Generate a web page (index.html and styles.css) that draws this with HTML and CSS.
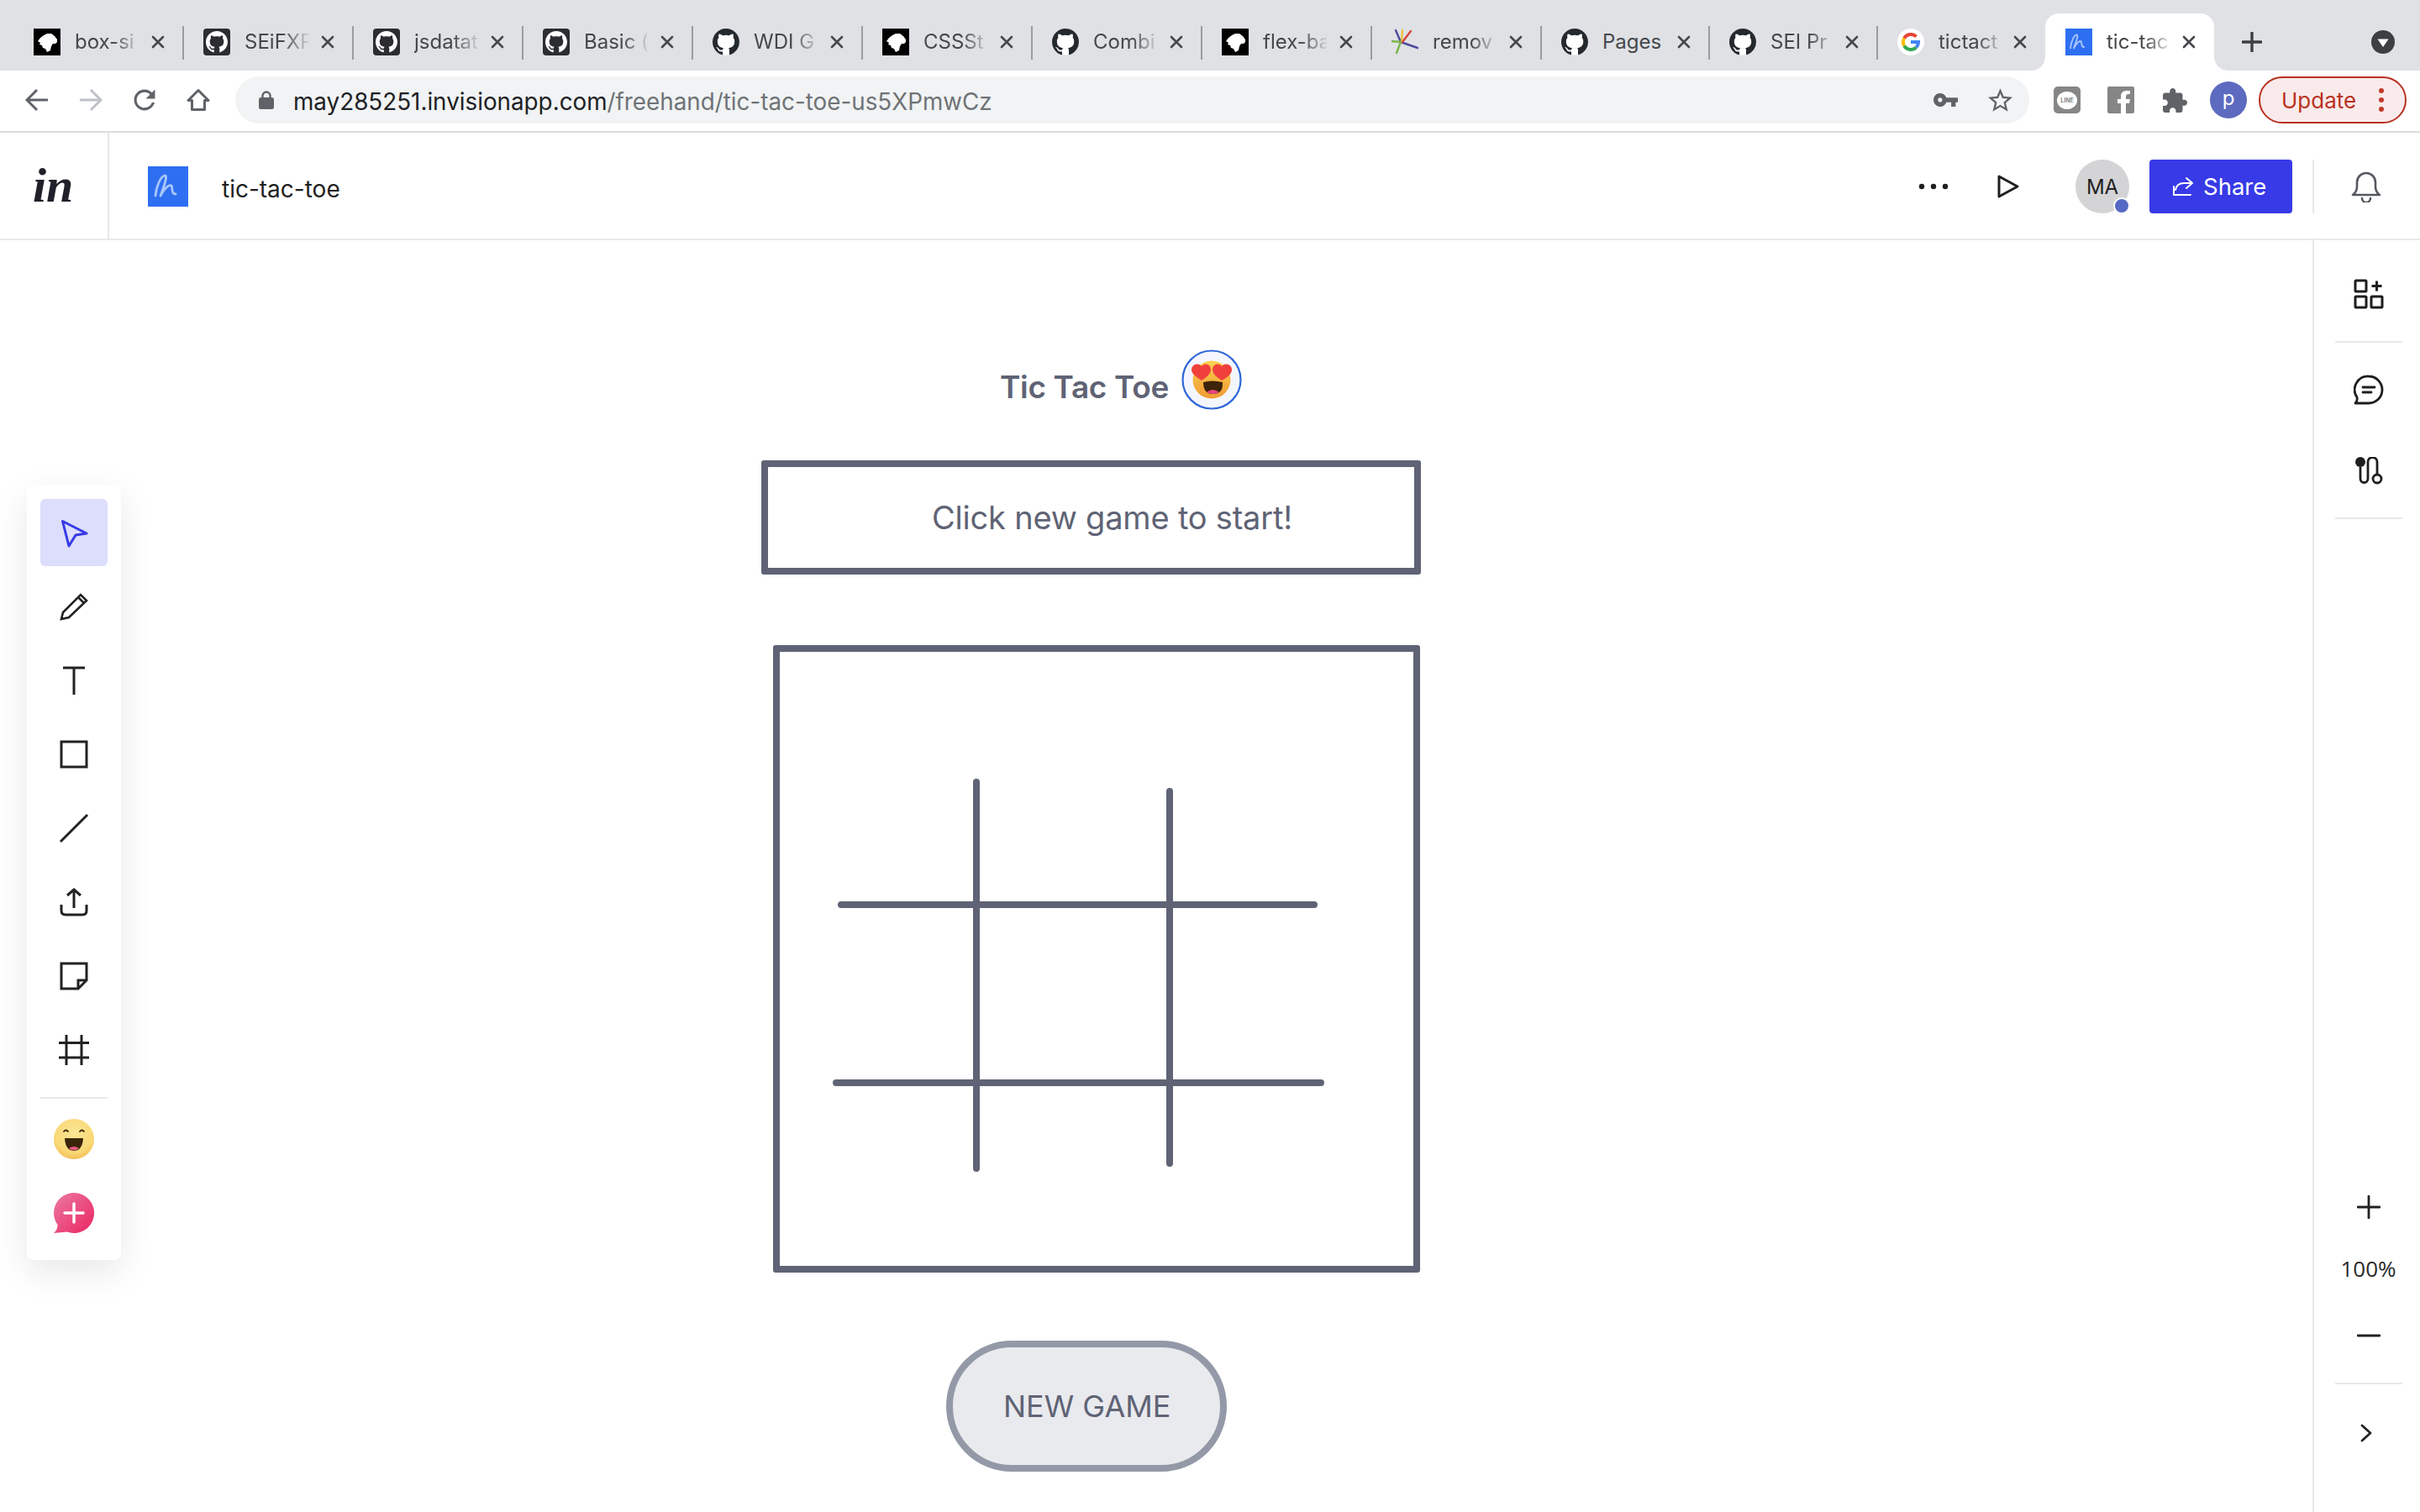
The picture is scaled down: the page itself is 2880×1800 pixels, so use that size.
FILE: index.html
```html
<!DOCTYPE html>
<html lang="en">
<head>
<meta charset="utf-8">
<title>tic-tac-toe</title>
<link rel="stylesheet" href="styles.css">
</head>
<body>
<svg class="defs" width="0" height="0" aria-hidden="true">
  <defs>
    <symbol id="octo" viewBox="0 0 16 16"><path d="M8 0C3.58 0 0 3.58 0 8c0 3.54 2.29 6.53 5.47 7.59.4.07.55-.17.55-.38 0-.19-.01-.82-.01-1.49-2.01.37-2.53-.49-2.69-.94-.09-.23-.48-.94-.82-1.13-.28-.15-.68-.52-.01-.53.63-.01 1.08.58 1.23.82.72 1.21 1.87.87 2.33.66.07-.52.28-.87.51-1.07-1.78-.2-3.64-.89-3.64-3.95 0-.87.31-1.59.82-2.15-.08-.2-.36-1.02.08-2.12 0 0 .67-.21 2.2.82.64-.18 1.32-.27 2-.27.68 0 1.36.09 2 .27 1.53-1.04 2.2-.82 2.2-.82.44 1.1.16 1.92.08 2.12.51.56.82 1.27.82 2.15 0 3.07-1.87 3.75-3.65 3.95.29.25.54.73.54 1.48 0 1.07-.01 1.93-.01 2.2 0 .21.15.46.55.38A8.013 8.013 0 0016 8c0-4.42-3.58-8-8-8z"/></symbol>
    <symbol id="fav-gh-plain" viewBox="0 0 32 32"><circle cx="16" cy="16" r="15.5" fill="#fff"/><use href="#octo" width="32" height="32" fill="#24292e"/></symbol>
    <symbol id="fav-gh" viewBox="0 0 32 32"><rect width="32" height="32" rx="4" fill="#2b2d30"/><use href="#octo" x="3" y="3" width="26" height="26" fill="#fff"/></symbol>
    <symbol id="fav-css" viewBox="0 0 32 32"><rect width="32" height="32" fill="#000"/><path fill="#fff" d="M5 15l3-4 4-3 4-2h5l4 3 3 4v3l-2 2h-3l-2 3-1 5-4 2-2-4-3-1-1-3-3-1 1-2z"/></symbol>
    <symbol id="fav-remove" viewBox="0 0 32 32"><g fill="none" stroke-width="2.4" stroke-linecap="round"><path stroke="#4f4a9b" d="M11 16l20 7"/><path stroke="#4f4a9b" d="M11 16L5 2"/><path stroke="#e8c33f" d="M12 16L13 2"/><path stroke="#d8463c" d="M13 16L23 3"/><path stroke="#7ab648" d="M11 16L6 29M11 16L0 15"/></g></symbol>
    <symbol id="fav-google" viewBox="0 0 32 32"><circle cx="16" cy="16" r="16" fill="#fff"/><g fill="none" stroke-width="4"><path stroke="#ea4335" d="M8.2 11.5A9 9 0 0 1 22.4 9.7"/><path stroke="#fbbc05" d="M8.2 11.5A9 9 0 0 0 8.2 20.5"/><path stroke="#34a853" d="M8.2 20.5A9 9 0 0 0 22.4 22.3"/><path stroke="#4285f4" d="M22.4 22.3A9 9 0 0 0 25 16H16"/></g></symbol>
    <symbol id="fav-hand" viewBox="0 0 48 48"><rect width="48" height="48" fill="#2e6ff2"/><path fill="none" stroke="#a9c6fb" stroke-width="2.800" stroke-linecap="round" stroke-linejoin="round" d="M9 35C10 24 15 12 20 11c4 0-1 13-5 24 4-8 10-14 13-12 2 3-1 10 5 10"/></symbol>
    <symbol id="tab-x" viewBox="0 0 16 16"><path d="M2 2l12 12M14 2L2 14" fill="none" stroke="#45474b" stroke-width="2.6" stroke-linecap="round"/></symbol>
  </defs>
</svg>

<header class="tabstrip">
  <div class="tab sep"><svg class="fav"><use href="#fav-css"/></svg><span class="label">box-si</span><svg class="close"><use href="#tab-x"/></svg></div>
  <div class="tab sep"><svg class="fav"><use href="#fav-gh"/></svg><span class="label">SEiFXR</span><svg class="close"><use href="#tab-x"/></svg></div>
  <div class="tab sep"><svg class="fav"><use href="#fav-gh"/></svg><span class="label">jsdatat</span><svg class="close"><use href="#tab-x"/></svg></div>
  <div class="tab sep"><svg class="fav"><use href="#fav-gh"/></svg><span class="label">Basic (</span><svg class="close"><use href="#tab-x"/></svg></div>
  <div class="tab sep"><svg class="fav"><use href="#fav-gh-plain"/></svg><span class="label">WDI G</span><svg class="close"><use href="#tab-x"/></svg></div>
  <div class="tab sep"><svg class="fav"><use href="#fav-css"/></svg><span class="label">CSSSt</span><svg class="close"><use href="#tab-x"/></svg></div>
  <div class="tab sep"><svg class="fav"><use href="#fav-gh-plain"/></svg><span class="label">Combi</span><svg class="close"><use href="#tab-x"/></svg></div>
  <div class="tab sep"><svg class="fav"><use href="#fav-css"/></svg><span class="label">flex-ba</span><svg class="close"><use href="#tab-x"/></svg></div>
  <div class="tab sep"><svg class="fav"><use href="#fav-remove"/></svg><span class="label">remov</span><svg class="close"><use href="#tab-x"/></svg></div>
  <div class="tab sep narrow"><svg class="fav"><use href="#fav-gh-plain"/></svg><span class="label full">Pages</span><svg class="close"><use href="#tab-x"/></svg></div>
  <div class="tab sep narrow"><svg class="fav"><use href="#fav-gh-plain"/></svg><span class="label">SEI Pr</span><svg class="close"><use href="#tab-x"/></svg></div>
  <div class="tab narrow"><svg class="fav"><use href="#fav-google"/></svg><span class="label">tictact</span><svg class="close"><use href="#tab-x"/></svg></div>
  <div class="tab narrow active"><svg class="fav"><use href="#fav-hand"/></svg><span class="label">tic-tac</span><svg class="close"><use href="#tab-x"/></svg></div>
  <svg class="newtab" viewBox="0 0 24 24"><path d="M12 1v22M1 12h22" fill="none" stroke="#3c4043" stroke-width="3.4" stroke-linecap="round"/></svg>
  <svg class="tabmenu" viewBox="0 0 28 28"><circle cx="14" cy="14" r="14" fill="#3c4043"/><path d="M7.5 10.5h13L14 20z" fill="#fff"/></svg>
</header>

<nav class="toolbar">
  <div class="navbtns">
    <svg class="navicon" viewBox="0 0 28 28"><path d="M27 14H3M14 2L2 14l12 12" fill="none" stroke="#5f6368" stroke-width="3"/></svg>
    <svg class="navicon" viewBox="0 0 28 28"><path d="M1 14h24M14 2l12 12-12 12" fill="none" stroke="#bdc1c6" stroke-width="3"/></svg>
    <svg class="navicon" viewBox="3 3 18 18"><path fill="#5f6368" d="M17.65 6.35C16.2 4.9 14.21 4 12 4c-4.42 0-7.99 3.58-7.99 8s3.57 8 7.99 8c3.73 0 6.84-2.55 7.73-6h-2.08c-.82 2.33-3.04 4-5.65 4-3.31 0-6-2.69-6-6s2.69-6 6-6c1.66 0 3.14.69 4.22 1.78L13 11h7V4l-2.35 2.35z"/></svg>
    <svg class="navicon" viewBox="0 0 28 28"><path d="M14 2.5L2 14.5h4.5v11h15v-11H26z" fill="none" stroke="#5f6368" stroke-width="3" stroke-linejoin="round"/></svg>
  </div>
  <div class="omnibox">
    <svg class="lock" viewBox="0 0 18 22"><path d="M4.5 9V6a4.5 4.5 0 0 1 9 0v3" fill="none" stroke="#5f6368" stroke-width="2.4"/><rect y="8" width="18" height="14" rx="2.5" fill="#5f6368"/></svg>
    <span class="url"><span class="host">may285251.invisionapp.com</span>/freehand/tic-tac-toe-us5XPmwCz</span>
    <svg class="key" viewBox="1 6 22 12"><path fill="#5f6368" d="M12.65 10C11.83 7.67 9.61 6 7 6c-3.31 0-6 2.69-6 6s2.69 6 6 6c2.61 0 4.83-1.67 5.65-4H17v4h4v-4h2v-4H12.65zM7 14c-1.1 0-2-.9-2-2s.9-2 2-2 2 .9 2 2-.9 2-2 2z"/></svg>
    <svg class="star" viewBox="2 2 20 19"><path fill="#5f6368" d="M22 9.24l-7.19-.62L12 2 9.19 8.63 2 9.24l5.46 4.73L5.82 21 12 17.27 18.18 21l-1.63-7.03L22 9.24zM12 15.4l-3.76 2.27 1-4.28-3.32-2.88 4.38-.38L12 6.1l1.71 4.04 4.38.38-3.32 2.88 1 4.28L12 15.4z"/></svg>
  </div>
  <div class="ext line"><span class="bubble">LINE</span></div>
  <svg class="ext fb" viewBox="0 0 32 32"><rect width="32" height="32" rx="2" fill="#868686"/><path fill="#fff" d="M22 32V20h4l1-5h-5v-3c0-2 1-3 3-3h2V5h-4c-5 0-7 3-7 7v3h-4v5h4v12z"/></svg>
  <svg class="puzzle" viewBox="2 1 21 21"><path fill="#5f6368" d="M20.5 11H19V7c0-1.1-.9-2-2-2h-4V3.5C13 2.12 11.88 1 10.5 1S8 2.12 8 3.5V5H4c-1.1 0-1.99.9-1.99 2v3.8H3.5c1.49 0 2.7 1.21 2.7 2.7s-1.21 2.7-2.7 2.7H2V20c0 1.1.9 2 2 2h3.8v-1.5c0-1.49 1.21-2.7 2.7-2.7 1.49 0 2.7 1.21 2.7 2.7V22H17c1.1 0 2-.9 2-2v-4h1.5c1.38 0 2.5-1.12 2.5-2.5S21.88 11 20.5 11z"/></svg>
  <div class="profile">p</div>
  <div class="update"><span>Update</span><span class="dots"><i></i><i></i><i></i></span></div>
</nav>

<header class="apphead">
  <div class="logo"><span class="logotext">in</span></div>
  <svg class="docicon"><use href="#fav-hand"/></svg>
  <span class="docname">tic-tac-toe</span>
  <div class="spacer"></div>
  <svg class="more" viewBox="0 0 36 8"><circle cx="4" cy="4" r="3.2"/><circle cx="18" cy="4" r="3.2"/><circle cx="32" cy="4" r="3.2"/></svg>
  <svg class="play" viewBox="0 0 28 30"><path d="M3 3l22 12L3 27z" fill="none" stroke="#1f1f1f" stroke-width="3" stroke-linejoin="round"/></svg>
  <div class="avatar">MA<span class="presence"></span></div>
  <div class="share">
    <svg class="shareicon" viewBox="0 0 26 24"><path d="M17 2l7 6-7 6M23 8h-9c-6 0-9 3-10 8M2 12v10h20" fill="none" stroke="#fff" stroke-width="2" stroke-linejoin="round" stroke-linecap="round"/></svg>
    <span>Share</span>
  </div>
  <div class="bellwrap">
    <svg class="bell" viewBox="0 0 36 38"><path d="M2 29c3-2 5-5 5-10v-5a11 11 0 0 1 22 0v5c0 5 2 8 5 10zM13 33a5 5 0 0 0 10 0" fill="none" stroke="#55585f" stroke-width="2.6" stroke-linejoin="round" stroke-linecap="round"/></svg>
  </div>
</header>

<main class="workspace">
  <section class="canvas">
    <h1 class="title">Tic Tac Toe</h1>
    <svg class="badge" viewBox="0 0 72 72">
      <defs><linearGradient id="faceg" x1="0" y1="0" x2="0" y2="1"><stop offset="0" stop-color="#fbd04e"/><stop offset="1" stop-color="#f09a33"/></linearGradient></defs>
      <circle cx="36" cy="36" r="34.5" fill="#f4f6fe" stroke="#2e67d8" stroke-width="2.2"/>
      <circle cx="36" cy="36" r="22.5" fill="url(#faceg)"/>
      <path fill="#f0403c" d="M24 37C17 32 12 29 12 24c0-6 8-9 12-4 4-5 11-2 11 4 0 5-5 9-11 13zM48 37c-6-4-11-8-11-13 0-6 7-9 11-4 4-5 12-2 12 4 0 5-5 9-12 13z"/>
      <path fill="#3e2408" d="M26 39q10-3 23 0q1 14-11.500 14Q26 53 26 39z"/>
      <path fill="#e9467f" d="M30 51q7-6 15 0q-7 4-15 0z"/>
    </svg>
    <div class="status">Click new game to start!</div>
    <div class="board"></div>
    <svg class="gridlines" viewBox="0 0 600 480">
      <g fill="none" stroke="#5f6375" stroke-width="8" stroke-linecap="round">
        <path d="M176 8V468M406 19V462M15 154H578M9 366H586"/>
      </g>
    </svg>
    <div class="newgame">NEW GAME</div>

    <aside class="tools">
      <div class="tool active"><svg class="toolicon" viewBox="0 0 36 36"><path d="M4.500 4.500L33 19l-13 2-8 13z" fill="none" stroke="#373ae6" stroke-width="3" stroke-linejoin="round"/></svg></div>
      <div class="tool"><svg class="toolicon" viewBox="0 0 36 36"><path d="M3 33l2-8L26 4l7 7-21 20zM23 7l7 7" fill="none" stroke="#222" stroke-width="2.600"/></svg></div>
      <div class="tool"><svg class="toolicon" viewBox="0 0 36 36"><path d="M5 3h26M18 3v32" fill="none" stroke="#222" stroke-width="3"/></svg></div>
      <div class="tool"><svg class="toolicon" viewBox="0 0 36 36"><rect x="3" y="3" width="30" height="30" fill="none" stroke="#222" stroke-width="3"/></svg></div>
      <div class="tool"><svg class="toolicon" viewBox="0 0 36 36"><path d="M2 34L34 2" fill="none" stroke="#222" stroke-width="3"/></svg></div>
      <div class="tool"><svg class="toolicon" viewBox="0 0 36 36"><path d="M18 3v22M10 10l8-7 8 7M3 21v7q0 5 5 5h20q5 0 5-5v-7" fill="none" stroke="#222" stroke-width="3"/></svg></div>
      <div class="tool"><svg class="toolicon" viewBox="0 0 36 36"><path d="M3 3h30v20L23 33H3zM33 23H23v10" fill="none" stroke="#222" stroke-width="3"/></svg></div>
      <div class="tool"><svg class="toolicon" viewBox="0 0 36 36"><path d="M9 0v36M27 0v36M0 9.500h36M0 27h36" fill="none" stroke="#222" stroke-width="3"/></svg></div>
      <div class="tooldiv"></div>
      <div class="tool"><svg class="bigicon" viewBox="0 0 48 48">
        <defs><radialGradient id="joy" cx=".5" cy=".35" r=".7"><stop offset="0" stop-color="#fbe596"/><stop offset=".7" stop-color="#f9d876"/><stop offset="1" stop-color="#f3b44f"/></radialGradient></defs>
        <circle cx="24" cy="24" r="24" fill="url(#joy)"/>
        <path d="M12 15q2.500-3 5 0M31 15q2.500-3 5 0" fill="none" stroke="#3a2508" stroke-width="1.800" stroke-linecap="round"/>
        <path d="M13 23h22q-1 15-11 15T13 23z" fill="#3a2508"/>
        <path d="M18 35q6-4 12 0q-6 5-12 0z" fill="#e85b84"/>
      </svg></div>
      <div class="tool"><svg class="bigicon" viewBox="0 0 48 48">
        <defs><linearGradient id="addg" x1="0" y1="0" x2="1" y2="1"><stop offset="0" stop-color="#ec7aa3"/><stop offset="1" stop-color="#ea2560"/></linearGradient></defs>
        <path d="M24 0a24 24 0 1 1-8 46.600L0 48q5-5 4.500-10A24 24 0 0 1 24 0z" fill="url(#addg)"/>
        <path d="M24 13v22M13 24h22" stroke="#fff" stroke-width="3.500" stroke-linecap="round"/>
      </svg></div>
    </aside>
  </section>

  <aside class="rail">
    <div class="railgroup">
      <svg class="railicon" viewBox="0 0 36 36"><g fill="none" stroke="#1e1e1e" stroke-width="3"><rect x="2" y="2" width="13" height="13" rx="1"/><rect x="2" y="21" width="13" height="13" rx="1"/><rect x="21" y="21" width="13" height="13" rx="1"/><path d="M27.500 2.500v12M21.500 8.500h12"/></g></svg>
      <div class="raildiv"></div>
      <svg class="railicon comment" viewBox="0 0 36 36"><g fill="none" stroke="#1e1e1e" stroke-width="2.800" stroke-linecap="round" stroke-linejoin="round"><path d="M18 2a16 16 0 1 1 0 32H2q3-3 2-7A16 16 0 0 1 18 2z"/><path d="M11 15h14M11 21h10"/></g></svg>
      <svg class="railicon flow" viewBox="0 0 36 36"><circle cx="8" cy="6" r="6" fill="#1e1e1e"/><path d="M8 12v14a4.500 4.500 0 0 0 9 0V6a5.500 5.500 0 0 1 11 0v14" fill="none" stroke="#1e1e1e" stroke-width="2.800"/><circle cx="28" cy="26" r="5" fill="none" stroke="#1e1e1e" stroke-width="2.800"/></svg>
      <div class="raildiv flowdiv"></div>
    </div>
    <div class="railgroup">
      <svg class="zoomplus" viewBox="0 0 28 28"><path d="M14 1v26M1 14h26" fill="none" stroke="#222" stroke-width="2.800" stroke-linecap="round"/></svg>
      <span class="zoomval">100%</span>
      <svg class="zoomminus" viewBox="0 0 28 4"><path d="M1 2h26" fill="none" stroke="#222" stroke-width="2.800" stroke-linecap="round"/></svg>
      <div class="raildiv bottomdiv"></div>
      <svg class="chev" viewBox="0 0 14 22"><path d="M2 2l10 9-10 9" fill="none" stroke="#222" stroke-width="2.800" stroke-linecap="round" stroke-linejoin="round"/></svg>
    </div>
  </aside>
</main>
</body>
</html>
```
FILE: styles.css
```css
* { box-sizing: border-box; }
html, body { margin: 0; height: 100%; }
body {
  display: flex;
  flex-direction: column;
  height: 1800px;
  overflow: hidden;
  background: #fff;
  font-family: "Inter", "Liberation Sans", sans-serif;
  color: #202124;
}
.defs { position: absolute; }
svg { display: block; flex: none; }

/* tab strip */
.tabstrip {
  display: flex;
  align-items: flex-end;
  height: 84px;
  padding-left: 16px;
  background: #dfe1e5;
  flex: none;
}
.tab {
  position: relative;
  display: flex;
  align-items: center;
  width: 202px;
  height: 68px;
  padding: 0 22px 0 24px;
  flex: none;
}
.tab.narrow { width: 200px; }
.tab.sep::after {
  content: "";
  position: absolute;
  right: -1px;
  top: 15px;
  width: 2px;
  height: 40px;
  background: #9a9ca0;
}
.tab.active {
  background: #fff;
  border-radius: 16px 16px 0 0;
  width: 201px;
}
.tab.active::before, .tab.active::after {
  content: "";
  position: absolute;
  bottom: 0;
  width: 16px;
  height: 16px;
  background: radial-gradient(circle at 0 0, #dfe1e5 15.500px, #fff 16px);
}
.tab.active::before { left: -16px; }
.tab.active::after { right: -16px; background: radial-gradient(circle at 100% 0, #dfe1e5 15.500px, #fff 16px); }
.fav { width: 32px; height: 32px; }
.label {
  flex: none;
  width: 76px;
  margin-left: 17px;
  margin-right: auto;
  font-size: 24px;
  line-height: 32px;
  white-space: nowrap;
  color: #45474b;
  -webkit-mask-image: linear-gradient(to right, #000 60%, rgba(0,0,0,.1) 100%);
  mask-image: linear-gradient(to right, #000 60%, rgba(0,0,0,.1) 100%);
}
.label.full { -webkit-mask-image: none; mask-image: none; }
.close { width: 16px; height: 16px; }
.newtab { width: 24px; height: 24px; margin: 0 0 22px 33px; }
.tabmenu { width: 28px; height: 28px; margin: 0 0 20px 130px; }

/* browser toolbar */
.toolbar {
  display: flex;
  align-items: center;
  height: 74px;
  padding: 8px 16px 10px 12px;
  border-bottom: 2px solid #dcdcdc;
  background: #fff;
  flex: none;
}
.navbtns { display: flex; width: 268px; }
.navicon { width: 28px; height: 28px; margin: 0 18px; }
.omnibox {
  display: flex;
  align-items: center;
  width: 2135px;
  height: 56px;
  padding: 0 20px 0 28px;
  border-radius: 28px;
  background: #f1f3f4;
}
.lock { width: 18px; height: 22px; margin-right: 23px; }
.url { flex: 1; padding-top: 3px; font-size: 27.800px; color: #6f7377; white-space: nowrap; }
.host { color: #202124; }
.key { width: 29px; height: 16px; margin-right: 36px; }
.star { width: 29px; height: 28px; }
.ext { width: 32px; height: 32px; }
.line {
  display: flex;
  align-items: center;
  justify-content: center;
  margin-left: 29px;
  border-radius: 5px;
  background: #868686;
}
.bubble {
  display: flex;
  align-items: center;
  justify-content: center;
  width: 24px;
  height: 21px;
  border-radius: 50%;
  background: #fff;
  color: #868686;
  font-size: 7px;
  font-weight: 700;
}
.fb { margin-left: 32px; }
.puzzle { width: 29px; height: 29px; margin-left: 34px; }
.profile {
  display: flex;
  align-items: center;
  justify-content: center;
  width: 44px;
  height: 44px;
  margin-left: 27px;
  padding-bottom: 6px;
  border-radius: 50%;
  background: #5c6bc0;
  color: #fff;
  font-size: 24px;
}
.update {
  display: flex;
  align-items: center;
  justify-content: space-between;
  width: 176px;
  height: 56px;
  margin-left: 14px;
  padding: 0 25px 0 25px;
  border: 2px solid #b93222;
  border-radius: 28px;
  background: #f9ebeb;
  color: #b93222;
  font-size: 26px;
}
.dots { display: flex; flex-direction: column; gap: 5px; }
.dots i { display: block; width: 6px; height: 6px; border-radius: 50%; background: #c0392b; }

/* app header */
.apphead {
  display: flex;
  align-items: center;
  height: 128px;
  padding-top: 2px;
  border-bottom: 2px solid #e8e8e8;
  flex: none;
}
.logo {
  display: flex;
  align-items: center;
  align-self: flex-start;
  width: 130px;
  height: 126px;
  margin-top: -2px;
  padding-left: 39px;
  border-right: 2px solid #e8e8e8;
}
.logotext {
  font-family: "Liberation Serif", serif;
  font-style: italic;
  font-weight: 700;
  font-size: 58px;
  line-height: 1;
  color: #1f2029;
}
.docicon { width: 48px; height: 48px; margin-left: 46px; }
.docname { margin-left: 40px; padding-top: 6px; font-size: 28px; color: #1f1f1f; }
.spacer { flex: 1; }
.more { width: 36px; height: 8px; fill: #1f1f1f; margin-right: 57px; }
.play { width: 28px; height: 30px; margin-right: 66px; }
.avatar {
  position: relative;
  display: flex;
  align-items: center;
  justify-content: center;
  width: 64px;
  height: 64px;
  margin-right: 24px;
  border-radius: 50%;
  background: #d4d4d6;
  font-size: 24px;
  color: #1f1f1f;
}
.presence {
  position: absolute;
  right: -1px;
  bottom: -1px;
  width: 20px;
  height: 20px;
  border: 2.500px solid #fff;
  border-radius: 50%;
  background: #5569c4;
}
.share {
  display: flex;
  align-items: center;
  gap: 11px;
  width: 170px;
  height: 64px;
  padding-left: 27px;
  border-radius: 4px;
  background: #373ae6;
  color: #fff;
  font-size: 27.500px;
}
.shareicon { width: 26px; height: 24px; }
.bellwrap {
  position: relative;
  display: flex;
  justify-content: flex-end;
  align-items: center;
  width: 152px;
  height: 64px;
  padding-right: 46px;
}
.bellwrap::before {
  content: "";
  position: absolute;
  left: 24px;
  top: 0;
  width: 2px;
  height: 64px;
  background: #e8e8e8;
}
.bell { width: 36px; height: 38px; }

/* workspace */
.workspace { display: flex; flex: 1; min-height: 0; }
.canvas { position: relative; flex: 1; background: #fff; }
.title {
  position: absolute;
  left: 1190px;
  top: 152px;
  margin: 0;
  font-size: 37px;
  letter-spacing: -.35px;
  line-height: 46px;
  font-weight: 600;
  color: #5f6375;
  white-space: nowrap;
}
.badge { position: absolute; left: 1406px; top: 130px; width: 72px; height: 72px; }
.status {
  position: absolute;
  left: 906px;
  top: 262px;
  width: 785px;
  height: 136px;
  padding-left: 195px;
  border: 8px solid #5f6375;
  border-radius: 3px;
  font-size: 38px;
  letter-spacing: -.2px;
  line-height: 121px;
  color: #5f6375;
  white-space: nowrap;
}
.board {
  position: absolute;
  left: 920px;
  top: 482px;
  width: 770px;
  height: 747px;
  border: 8px solid #5f6375;
  border-radius: 3px;
}
.gridlines { position: absolute; left: 986px; top: 637px; width: 600px; height: 480px; }
.newgame {
  position: absolute;
  left: 1126px;
  top: 1310px;
  width: 334px;
  height: 156px;
  padding-left: 60px;
  border: 8px solid #9399a7;
  border-radius: 78px;
  background: #e9eaee;
  font-size: 36px;
  line-height: 140px;
  color: #5f6375;
  white-space: nowrap;
}

/* left tools */
.tools {
  position: absolute;
  left: 32px;
  top: 291px;
  display: flex;
  flex-direction: column;
  gap: 8px;
  width: 112px;
  height: 923px;
  padding: 17px 16px;
  border-radius: 8px;
  background: #fff;
  box-shadow: 0 14px 40px rgba(30, 30, 50, .10);
}
.tool {
  display: flex;
  align-items: center;
  justify-content: center;
  width: 80px;
  height: 80px;
  flex: none;
  border-radius: 6px;
}
.tool.active { background: #dcdefb; }
.toolicon { width: 36px; height: 36px; }
.bigicon { width: 48px; height: 48px; }
.tooldiv { height: 2px; margin-top: 8px; background: #e8e8e8; flex: none; }

/* right rail */
.rail {
  display: flex;
  flex-direction: column;
  justify-content: space-between;
  width: 128px;
  padding: 46px 0 83px;
  border-left: 2px solid #e8e8e8;
  flex: none;
}
.railgroup { display: flex; flex-direction: column; align-items: center; padding: 0 15px 0 18px; }
.railicon { width: 36px; height: 36px; }
.raildiv { width: 80px; height: 2px; margin-top: 38px; background: #e8e8e8; }
.comment { margin-top: 38px; }
.flow { margin-top: 62px; }
.flowdiv { margin-top: 36px; }
.zoomplus { width: 28px; height: 28px; }
.zoomval { margin-top: 42px; font-family: "Open Sans", sans-serif; font-size: 26px; line-height: 34px; color: #2a2a2a; }
.zoomminus { width: 28px; height: 4px; margin-top: 61px; }
.bottomdiv { margin-top: 54px; }
.chev { width: 14px; height: 22px; margin-top: 47px; margin-right: 6px; }
```
